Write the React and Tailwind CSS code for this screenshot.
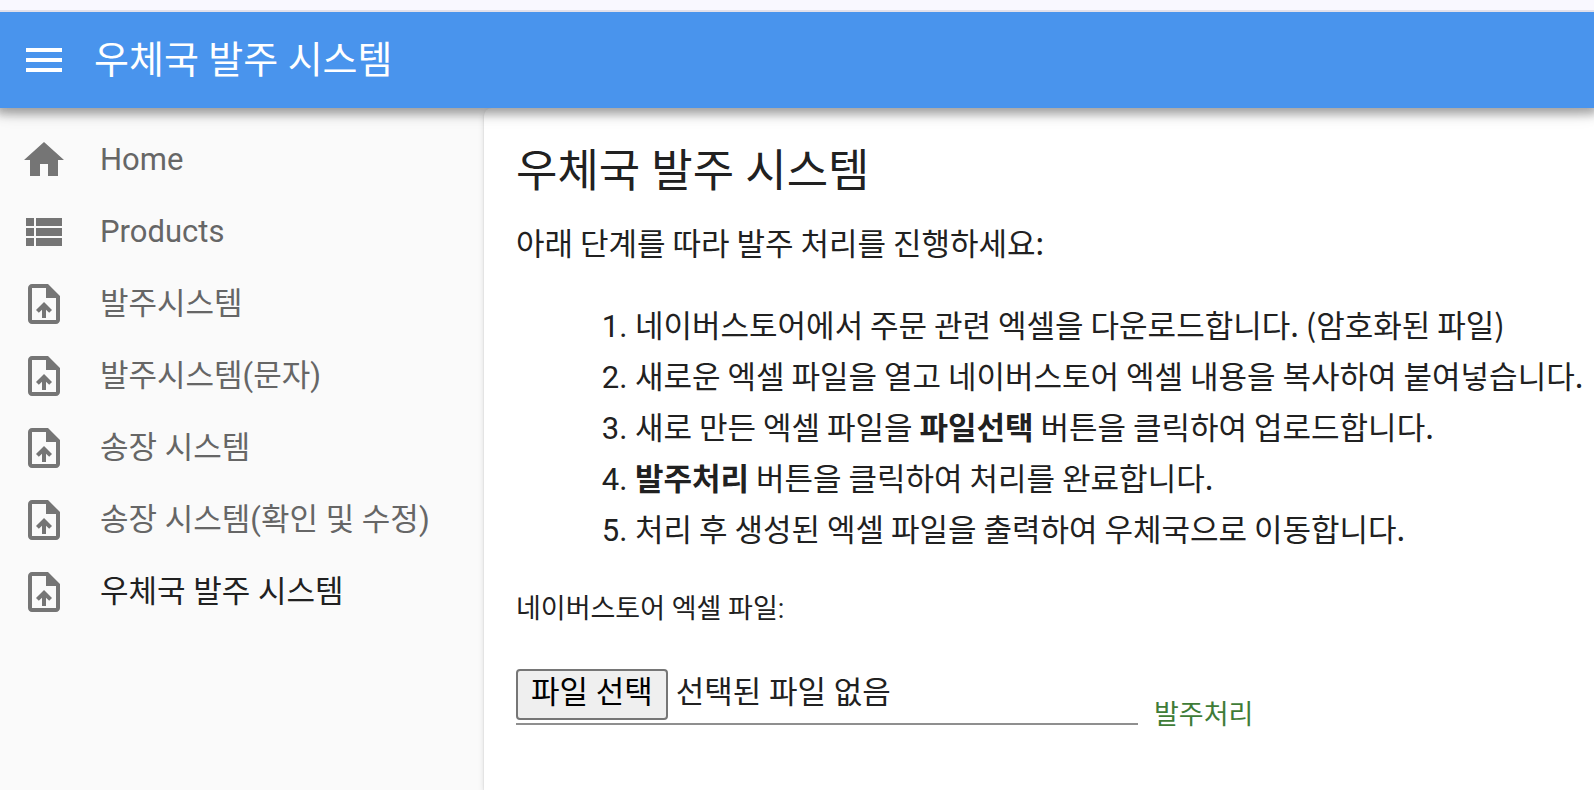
import { useState } from "react";

const ICONS = {
  menu: "M3 18h18v-2H3v2zm0-5h18v-2H3v2zm0-7v2h18V6H3z",
  home: "M10 20v-6h4v6h5v-8h3L12 3 2 12h3v8z",
  list: "M3 14h4v-4H3v4zm0 5h4v-4H3v4zM3 9h4V5H3v4zm5 5h13v-4H8v4zm0 5h13v-4H8v4zM8 5v4h13V5H8z",
  upload:
    "M14 2H6c-1.1 0-1.99.9-1.99 2L4 20c0 1.1.89 2 1.99 2H18c1.1 0 2-.9 2-2V8l-6-6zm4 18H6V4h7v5h5v11zM8 15.01l1.41 1.41L11 14.84V19h2v-4.16l1.59 1.59L16 15.01 12.01 11 8 15.01z",
};

const MENU = [
  { label: "Home", icon: "home", href: "#/" },
  { label: "Products", icon: "list", href: "#/products" },
  { label: "발주시스템", icon: "upload", href: "#/order" },
  { label: "발주시스템(문자)", icon: "upload", href: "#/order-sms" },
  { label: "송장 시스템", icon: "upload", href: "#/invoice" },
  { label: "송장 시스템(확인 및 수정)", icon: "upload", href: "#/invoice-edit" },
  { label: "우체국 발주 시스템", icon: "upload", href: "#/post-office", active: true },
];

function Icon({ name }) {
  return (
    <svg viewBox="0 0 24 24" className="size-12 shrink-0 fill-current" aria-hidden="true">
      <path d={ICONS[name]} />
    </svg>
  );
}

function Header({ onToggle }) {
  return (
    <header className="relative z-10 flex h-24 items-center gap-[26px] bg-[#4994ed] px-5 text-white shadow-[0_2px_8px_3px_rgba(0,0,0,0.2),0_4px_10px_4px_rgba(0,0,0,0.14),0_2px_20px_0_rgba(0,0,0,0.12)]">
      <button type="button" aria-label="메뉴" onClick={onToggle}>
        <Icon name="menu" />
      </button>
      <span className="text-[38px] leading-12">우체국 발주 시스템</span>
    </header>
  );
}

function Sidebar() {
  return (
    <nav className="w-[484px] shrink-0 pt-4">
      {MENU.map((item) => (
        <a
          key={item.href}
          href={item.href}
          className={`flex h-18 items-center gap-8 px-5 text-[31px] leading-12 ${
            item.active ? "text-[#212121]" : "text-[#666666]"
          }`}
        >
          <span className="text-[#757575]">
            <Icon name={item.icon} />
          </span>
          {item.label}
        </a>
      ))}
    </nav>
  );
}

function PostOfficeOrder() {
  const [file, setFile] = useState(null);

  return (
    <main className="min-w-0 flex-1 rounded-tl-lg bg-white pt-[34px] pl-8 text-[31px] leading-[51px] text-[#212121] shadow-[0_4px_2px_-2px_rgba(0,0,0,0.2),0_2px_2px_0_rgba(0,0,0,0.14),0_2px_6px_0_rgba(0,0,0,0.12)]">
      <h1 className="text-[45px] leading-15">우체국 발주 시스템</h1>
      <p className="mt-3.5 font-['Noto_Sans_CJK_KR',sans-serif]">아래 단계를 따라 발주 처리를 진행하세요:</p>

      <ol className="mt-[31px] list-decimal pl-[119px] font-['Noto_Sans_CJK_KR',sans-serif] marker:font-[Roboto]">
        <li>네이버스토어에서 주문 관련 엑셀을 다운로드합니다. (암호화된 파일)</li>
        <li>새로운 엑셀 파일을 열고 네이버스토어 엑셀 내용을 복사하여 붙여넣습니다.</li>
        <li>
          새로 만든 엑셀 파일을 <strong>파일선택</strong> 버튼을 클릭하여 업로드합니다.
        </li>
        <li>
          <strong>발주처리</strong> 버튼을 클릭하여 처리를 완료합니다.
        </li>
        <li>처리 후 생성된 엑셀 파일을 출력하여 우체국으로 이동합니다.</li>
      </ol>

      <p className="mt-9 text-[27px] leading-10">네이버스토어 엑셀 파일:</p>

      {/* Upload row */}
      <div className="mt-10 flex items-end gap-4">
        <div className="flex w-[622px] items-start gap-2 border-b-2 border-[#8f8f8f] pb-[3px]">
          <input
            id="order-file"
            type="file"
            accept=".xlsx,.xls"
            className="sr-only"
            onChange={(e) => setFile(e.target.files[0])}
          />
          <label
            htmlFor="order-file"
            className="rounded-sm border-2 border-[#767676] bg-[#efefef] px-[13px] pb-[3px] leading-11 text-black"
          >
            파일 선택
          </label>
          <span className="leading-12">{file ? file.name : "선택된 파일 없음"}</span>
        </div>
        <button type="button" className="text-[27px] leading-5 text-[#3f7c37]">
          발주처리
        </button>
      </div>
    </main>
  );
}

function App() {
  const [open, setOpen] = useState(true);

  return (
    <div className="flex min-h-screen flex-col overflow-x-clip bg-[#fafafa] font-[Roboto,'Noto_Sans_CJK_KR',sans-serif]">
      <div className="relative z-20 h-3 border-b-2 border-[#e2e0ea] bg-[#f9f8ff]" />
      <Header onToggle={() => setOpen(!open)} />
      <div className="flex flex-1">
        {open && <Sidebar />}
        <PostOfficeOrder />
      </div>
    </div>
  );
}

export default App;
